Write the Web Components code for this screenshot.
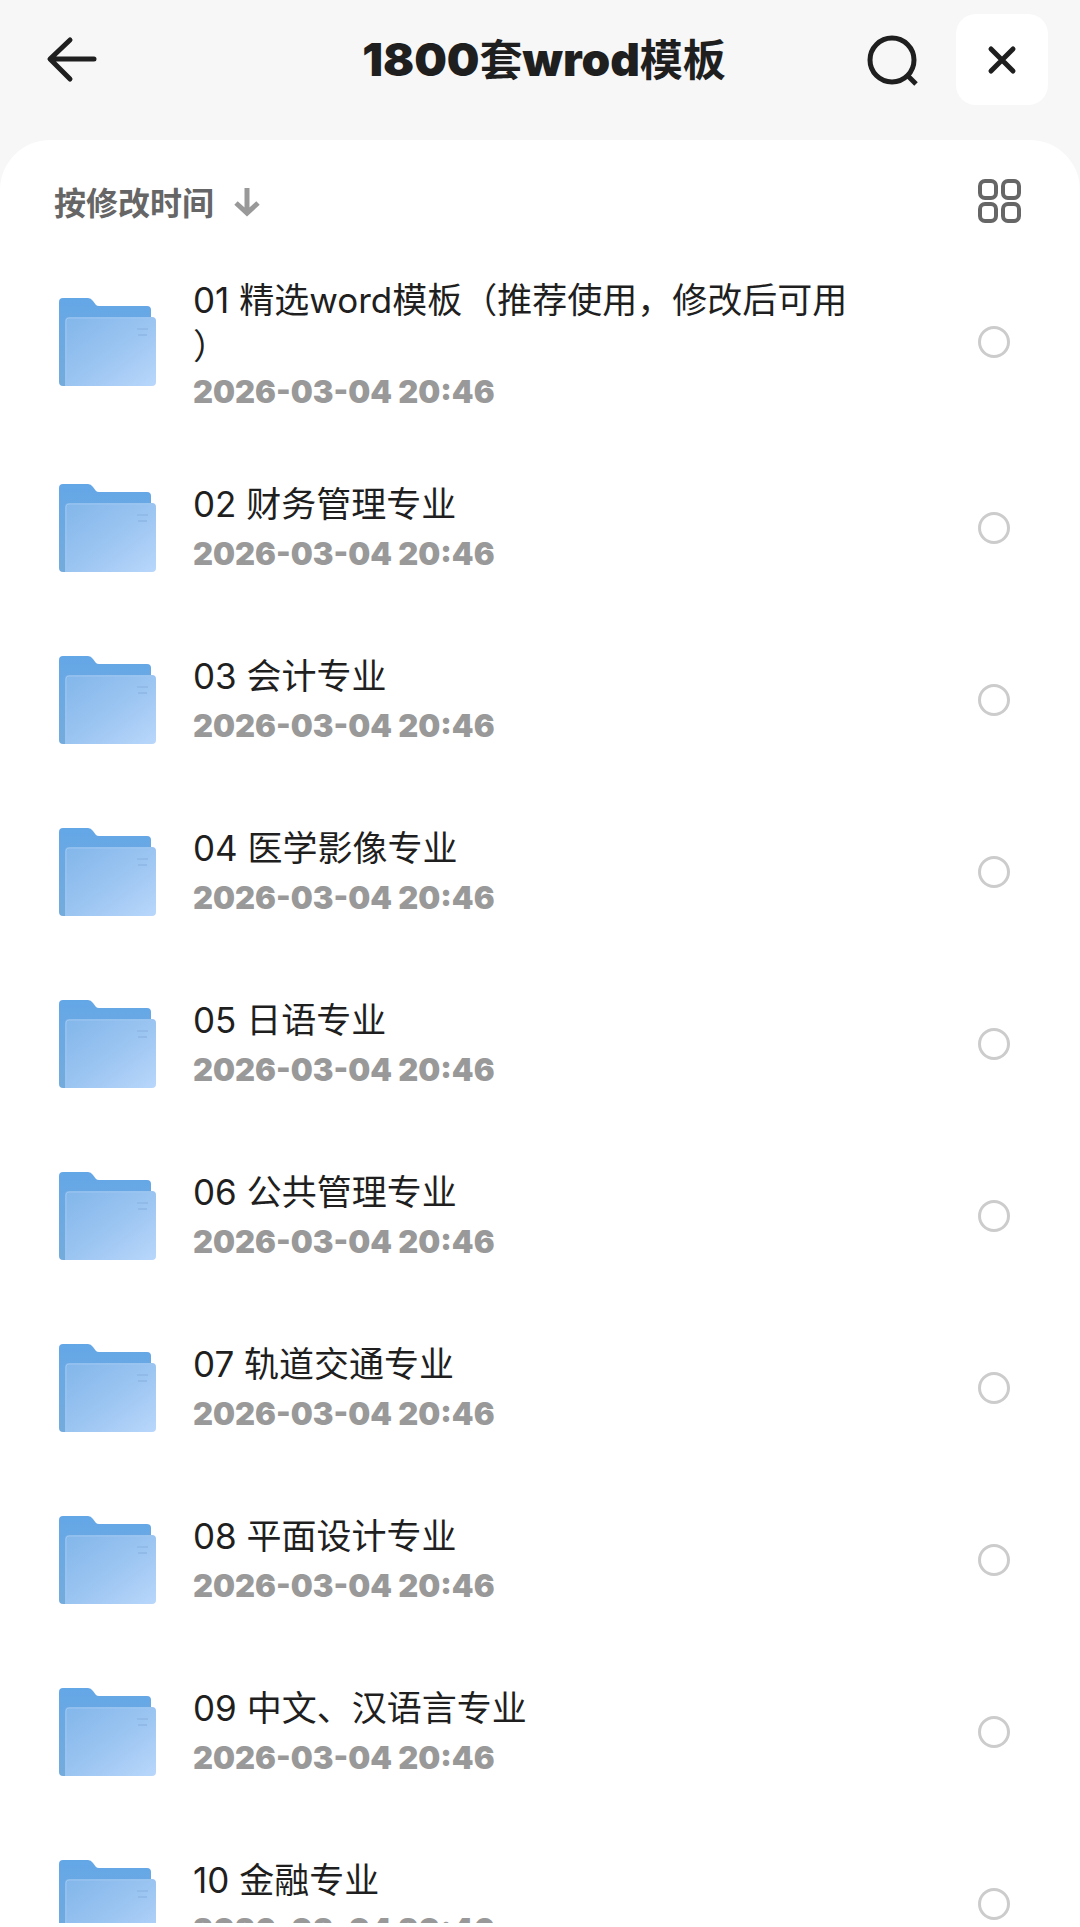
<!DOCTYPE html>
<html lang="zh-CN">
<head>
<meta charset="utf-8">
<meta name="viewport" content="width=device-width, initial-scale=1">
<title>1800套wrod模板</title>
<style>
    body{
        margin: 0;
        background-color: #f7f7f7;
        color: #1f1f1f;
        font-family: Inter, "Noto Sans CJK SC", sans-serif;
    }
</style>
</head>
<body>
<file-browser></file-browser>

<script>
class BaseElement extends HTMLElement {
    constructor(){
        super();
        this.attachShadow({mode:'open'});
        let template = document.createElement('template');
        template.innerHTML = this.getHTMLAsString();
        this.shadowRoot.appendChild(template.content.cloneNode(true));
    }
}

class TopBar extends BaseElement {
    getHTMLAsString(){
        return `
        <style>
            :host{
                display: grid;
                grid-template-columns: 1fr auto 1fr;
                align-items: center;
                padding: 14px 32px 35px 40px;
            }
            h1{
                margin: 0;
                font-size: 43px;
                line-height: 60px;
                font-weight: 700;
                white-space: nowrap;
            }
            ::slotted(b){
                font-size: 46px;
                line-height: 1;
                font-weight: 900;
            }
            button{
                display: flex;
                align-items: center;
                justify-content: center;
                border: 0;
                padding: 0;
                background: none;
                color: inherit;
                cursor: pointer;
            }
            .back, .search{
                width: 64px;
                height: 64px;
            }
            .actions{
                display: flex;
                align-items: center;
                justify-content: flex-end;
                gap: 32px;
            }
            .close{
                width: 92px;
                height: 91px;
                border-radius: 20px;
                background-color: #fff;
            }
            svg{
                fill: none;
                stroke: currentColor;
                stroke-width: 5;
            }
        </style>
        <button class="back" aria-label="返回">
            <svg width="52" height="48" viewBox="0 0 52 48" stroke-linecap="round" stroke-linejoin="round">
                <path d="M24 4 L4 23 L24 43 M5 23 H48"/>
            </svg>
        </button>
        <h1><slot></slot></h1>
        <div class="actions">
            <button class="search" aria-label="搜索">
                <svg width="52" height="52" viewBox="0 0 52 52">
                    <circle cx="26" cy="26" r="22"/>
                    <path d="M41 41 L50 50"/>
                </svg>
            </button>
            <button class="close" aria-label="关闭">
                <svg width="32" height="32" viewBox="0 0 32 32" stroke-linecap="round">
                    <path d="M5 5 L27 27 M27 5 L5 27"/>
                </svg>
            </button>
        </div>
        `
    }
}

class SortBar extends BaseElement {
    getHTMLAsString(){
        return `
        <style>
            :host{
                display: flex;
                align-items: center;
                justify-content: space-between;
                padding: 20px 59px 0 54px;
                color: #666;
            }
            button{
                display: flex;
                align-items: center;
                gap: 20px;
                height: 82px;
                border: 0;
                padding: 0;
                background: none;
                color: inherit;
                font: inherit;
                font-size: 32px;
                font-weight: 700;
                cursor: pointer;
            }
            svg{
                fill: none;
                stroke: currentColor;
            }
            .arrow{
                color: #999;
            }
        </style>
        <button>
            <slot></slot>
            <svg class="arrow" width="28" height="32" viewBox="0 0 28 32" stroke-width="5">
                <path d="M13 3 V28 M2 18 L13 28 L24 18"/>
            </svg>
        </button>
        <button aria-label="网格视图">
            <svg width="43" height="44" viewBox="0 0 43 44" stroke-width="4">
                <rect x="2" y="2" width="16" height="17" rx="5"/>
                <rect x="25" y="2" width="16" height="17" rx="5"/>
                <rect x="2" y="25" width="16" height="17" rx="5"/>
                <rect x="25" y="25" width="16" height="17" rx="5"/>
            </svg>
        </button>
        `
    }
}

class FolderIcon extends BaseElement {
    getHTMLAsString(){
        return `
        <style>
            :host{
                display: block;
                flex: none;
            }
            svg{
                display: block;
            }
        </style>
        <svg width="98" height="90" viewBox="0 0 98 90" aria-hidden="true">
            <defs>
                <linearGradient id="back" x1="0" y1="0" x2="0" y2="1">
                    <stop offset="0" stop-color="#64a7e7"/>
                    <stop offset="1" stop-color="#74abdc"/>
                </linearGradient>
                <linearGradient id="front" x1="0" y1="0" x2="1" y2="1">
                    <stop offset="0" stop-color="#82b6ea"/>
                    <stop offset="0.5" stop-color="#9ac4f1"/>
                    <stop offset="1" stop-color="#b9d7fb"/>
                </linearGradient>
            </defs>
            <path d="M4 1 H29 Q32 1 34 4 L37 8 Q38 9 40 9 H88 Q92 9 92 13 V89 H4 Q0 89 0 85 V5 Q0 1 4 1 Z" fill="url(#back)"/>
            <path d="M10 20 H93 Q97 20 97 24 V85 Q97 89 93 89 H6 V24 Q6 20 10 20 Z" fill="url(#front)"/>
            <path d="M7 89 V24 Q7 21 10 21 H93" fill="none" stroke="#9dc6f1" stroke-width="1"/>
            <path d="M78 32 H89 M79 38 H88" stroke="#92bae8" stroke-width="2"/>
        </svg>
        `
    }
}

class FolderRow extends BaseElement {
    getHTMLAsString(){
        return `
        <style>
            :host{
                display: flex;
                align-items: center;
                box-sizing: border-box;
                min-height: 172px;
                padding: 0 70px 0 59px;
            }
            label{
                flex: 1;
                align-self: flex-start;
                margin: 0 120px 0 36px;
                padding: 35px 0 27px;
            }
            .name{
                display: flex;
                align-items: center;
                min-height: 54px;
                font-size: 35px;
                line-height: 46px;
                line-break: anywhere;
            }
            time{
                display: block;
                color: #999;
                font-size: 31px;
                line-height: 46px;
                font-weight: 900;
            }
            input{
                appearance: none;
                flex: none;
                box-sizing: border-box;
                width: 32px;
                height: 32px;
                margin: 0;
                border: 3px solid #ccc;
                border-radius: 50%;
            }
            input:checked{
                border-width: 10px;
                border-color: #64a7e7;
            }
        </style>
        <folder-icon></folder-icon>
        <label for="pick">
            <span class="name"><span><slot></slot></span></span>
            <time><slot name="date"></slot></time>
        </label>
        <input id="pick" type="checkbox">
        `
    }
}

class FileBrowser extends BaseElement {
    getHTMLAsString(){
        return `
        <style>
            :host{
                display: flex;
                flex-direction: column;
                box-sizing: border-box;
                height: 100vh;
            }
            main{
                flex: 1;
                min-height: 0;
                display: flex;
                flex-direction: column;
                padding-bottom: 4px;
                border-radius: 50px 50px 0 0;
                background-color: #fff;
            }
            .list{
                flex: 1;
                min-height: 0;
                overflow: hidden;
            }
        </style>
        <top-bar><b>1800</b>套<b>wrod</b>模板</top-bar>
        <main>
            <sort-bar>按修改时间</sort-bar>
            <div class="list"></div>
        </main>
        `
    }
    connectedCallback(){
        let list = this.shadowRoot.querySelector('.list');
        folders.forEach(name => {
            let row = document.createElement('folder-row');
            row.textContent = name;
            let date = document.createElement('span');
            date.slot = 'date';
            date.textContent = '2026-03-04 20:46';
            row.appendChild(date);
            list.appendChild(row);
        });
    }
}

const folders = [
    '01 精选word模板（推荐使用，修改后可用）',
    '02 财务管理专业',
    '03 会计专业',
    '04 医学影像专业',
    '05 日语专业',
    '06 公共管理专业',
    '07 轨道交通专业',
    '08 平面设计专业',
    '09 中文、汉语言专业',
    '10 金融专业'
];

window.customElements.define('top-bar', TopBar);
window.customElements.define('sort-bar', SortBar);
window.customElements.define('folder-icon', FolderIcon);
window.customElements.define('folder-row', FolderRow);
window.customElements.define('file-browser', FileBrowser);
</script>
</body>
</html>
